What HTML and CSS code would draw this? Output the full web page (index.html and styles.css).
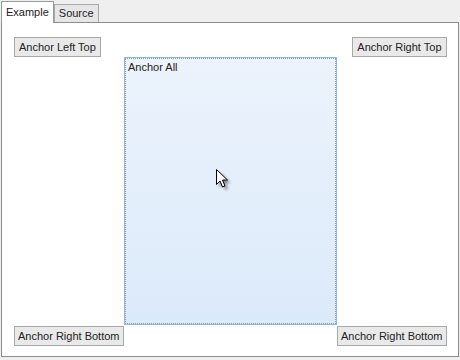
FILE: index.html
```html
<!DOCTYPE html>
<html lang="en">

<head>
    <meta charset="UTF-8">
    <title>Anchor Layout</title>
    <link rel="stylesheet" href="styles.css">
</head>

<body>

    <div class="tabs">
        <div class="tab active">Example</div>
        <div class="tab">Source</div>
    </div>

    <div class="panel">
        <button class="btn top-left">Anchor Left Top</button>
        <button class="btn top-right">Anchor Right Top</button>
        <div class="anchor-all">Anchor All</div>
        <button class="btn bottom-left">Anchor Right Bottom</button>
        <button class="btn bottom-right">Anchor Right Bottom</button>

        <!-- mouse pointer over the box -->
        <svg class="cursor" width="20" height="26" viewBox="0 0 20 26">
            <defs>
                <filter id="blur" x="-50%" y="-50%" width="200%" height="200%">
                    <feGaussianBlur stdDeviation="1.6" />
                </filter>
            </defs>
            <path d="M3.5 3.5 L3.5 18.5 L7 15 L9.5 21 L12 20 L9.5 14 L14.5 14 Z" fill="#000" opacity="0.45" filter="url(#blur)" />
            <path d="M0.5 0.5 L0.5 15.5 L4 12 L6.5 18 L9 17 L6.5 11 L11.5 11 Z" fill="#fff" stroke="#000" stroke-width="1" stroke-linejoin="miter" />
        </svg>
    </div>

</body>

</html>
```

FILE: styles.css
```css
/* General */
body {
    margin: 0;
    padding: 0;
    width: 460px;
    height: 360px;
    background-color: #efefef;
    font-family: "Liberation Sans", Arial, sans-serif;
    font-size: 11px;
    color: #222;
    overflow: hidden;
}

/* Tabs */
.tabs {
    display: flex;
    align-items: flex-end;
    height: 22px;
    padding-left: 1px;
}

.tab {
    height: 17px;
    line-height: 17px;
    padding: 0 4px;
    background-color: #e6e6e6;
    border: 1px solid #a8a8a8;
    border-bottom: none;
}

.tab.active {
    height: 21px;
    line-height: 20px;
    background-color: #fff;
    border-color: #999;
    position: relative;
    z-index: 1;
    margin-bottom: -1px;
}

/* Panel */
.panel {
    position: relative;
    margin-left: 1px;
    width: 432px;
    height: 309px;
    padding: 14px 12px 10px 12px;
    background-color: #fff;
    border: 1px solid #8c8c8c;
    display: grid;
    grid-template-columns: 110px 213px 1fr;
    grid-template-rows: 20px 268px 20px;
    align-items: start;
}

.btn {
    height: 20px;
    padding: 0 4px;
    font-family: inherit;
    font-size: 11px;
    color: #222;
    background-color: #e9e9e9;
    border: 1px solid #a8a8a8;
    border-radius: 0;
    white-space: nowrap;
}

.top-left {
    grid-column: 1;
    grid-row: 1;
    justify-self: start;
}

.top-right {
    grid-column: 3;
    grid-row: 1;
    justify-self: end;
}

.bottom-left,
.bottom-right {
    grid-row: 3;
    margin-top: 1px;
    padding: 0 3px;
}

.bottom-left {
    grid-column: 1;
    justify-self: start;
}

.bottom-right {
    grid-column: 3;
    justify-self: end;
}

.anchor-all {
    grid-column: 2;
    grid-row: 2;
    height: 268px;
    box-sizing: border-box;
    padding: 3px 3px;
    color: #222;
    border: 1px solid #8ab8ea;
    outline: 1px dotted #9a9a9a;
    outline-offset: -2px;
    background: linear-gradient(to bottom, #ecf3fc, #dbeafa);
}

.cursor {
    position: absolute;
    left: 214px;
    top: 146px;
}
```
